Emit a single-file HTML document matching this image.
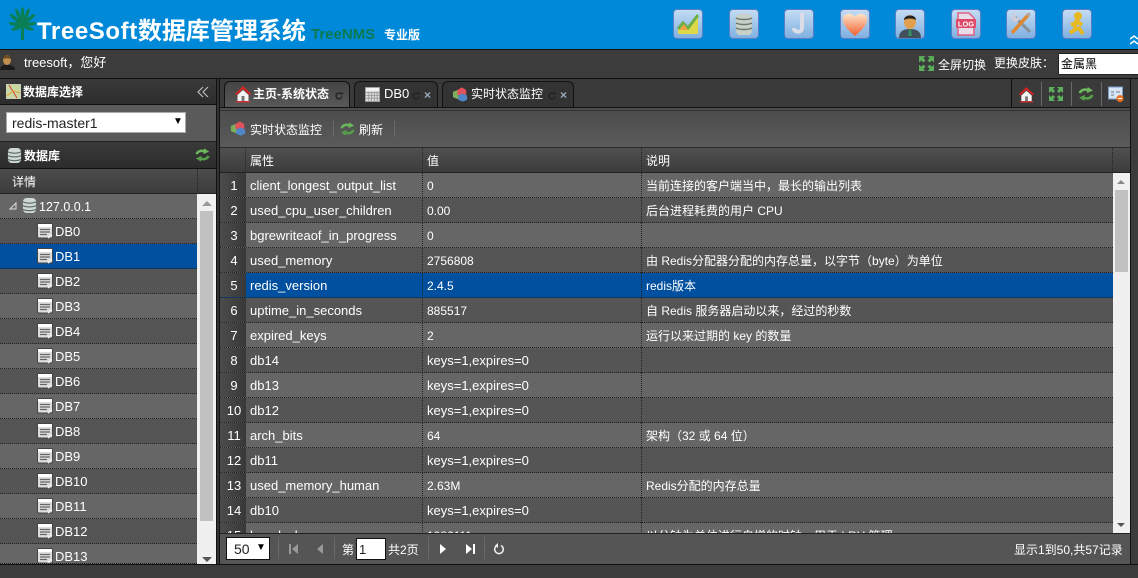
<!DOCTYPE html>
<html><head><meta charset="utf-8"><style>
*{box-sizing:border-box}
html,body{margin:0;padding:0;width:1138px;height:578px;overflow:hidden;background:#3c3c3c;font-family:"Liberation Sans","Noto Sans CJK SC",sans-serif;font-size:13px;color:#fff}
.a{position:absolute;white-space:nowrap}
.t{position:absolute;white-space:nowrap;line-height:16px}
.ti{position:absolute;top:9px;width:30px;height:30px;border:1px solid #5b7fc4;border-radius:4px;background:linear-gradient(#c4dcf4,#7fb0e0)}
.ti svg,.i svg{display:block}
.i{position:absolute}
.hd{background:linear-gradient(#3a3a3a,#2c2c2c)}
.r{position:absolute;left:220px;width:893px;height:25px;border-bottom:1px dotted #222;line-height:26px}
.r span{position:absolute;top:0;white-space:nowrap}
.r .n{left:0;width:26px;height:24px;text-align:center;background:linear-gradient(90deg,#4c4c4c,#383838);padding-left:2px}
.r .k{left:30px}.r .v{left:207px}.r .d{left:426px;font-size:12px}.r .m{font-size:12px}
.r:before,.r:after{content:"";position:absolute;top:0;height:25px;border-left:1px dotted #222}
.r:before{left:202px}.r:after{left:421px}
.o{background:#666}.e{background:#555}.s{background:#00509f}
.l{position:absolute;left:0;width:197px;height:25px;border-bottom:1px dotted #222;line-height:26px}
.l span{position:absolute;left:55px}
.l svg{position:absolute;left:37px;top:4px}
.sp{position:absolute;width:1px;background:#6a6a6a}
</style></head><body>
<svg width="0" height="0" style="position:absolute"><defs>
<symbol id="db" viewBox="0 0 16 16"><rect x=".5" y=".5" width="15" height="14.500" rx="1.500" fill="#ddd" stroke="#444"/><rect x="1" y="1" width="14" height="3" fill="#fff"/><path d="M3 6.500h10M3 9h10M3 11.500h7" stroke="#666" stroke-width="1.200"/><path d="M11 15l4-3.500" stroke="#eee" stroke-width="1.500"/></symbol>
<symbol id="cyl" viewBox="0 0 16 18"><rect x="1" y="1" width="14" height="16" rx="4" fill="#cfd8d4"/><path d="M1 5c3 2 11 2 14 0M1 9c3 2 11 2 14 0M1 13c3 2 11 2 14 0" stroke="#5a6a64" stroke-width="1.200" fill="none"/></symbol>
<symbol id="ref" viewBox="0 0 18 16"><path d="M2 7C3 3 8 2 12 4" stroke="#6cb85c" stroke-width="3" fill="none"/><path d="M11 0l6 4-7 3z" fill="#6cb85c"/><path d="M16 9C15 13 10 14 6 12" stroke="#55a048" stroke-width="3" fill="none"/><path d="M7 16l-6-4 7-3z" fill="#55a048"/></symbol>
<symbol id="home" viewBox="0 0 18 18"><path d="M9 1L1 9l1.500 1L9 4l6.500 6L17 9z" fill="#d22"/><path d="M3.500 10L9 5l5.500 5v6h-11z" fill="#f4f4f4"/><rect x="7.500" y="11" width="3" height="5" fill="#777"/><rect x="2" y="16" width="14" height="1.500" fill="#c33"/></symbol>
<symbol id="cube" viewBox="0 0 18 16"><path d="M1 5l5-2 4 2v6l-4 2-5-2z" fill="#7cb05c"/><path d="M6 3l5-3 5 3v5l-5 2-5-2z" fill="#e2525a"/><path d="M7 9l5-2 5 2v5l-5 2-5-2z" fill="#4f86c8"/></symbol>
<symbol id="cal" viewBox="0 0 16 16"><rect x=".5" y=".5" width="15" height="15" fill="#ddd" stroke="#999"/><rect x="1" y="1" width="14" height="3" fill="#f4f4f4"/><path d="M1 6h14M1 9h14M1 12h14M4 5v10M7 5v10M10 5v10M13 5v10" stroke="#999" fill="none"/></symbol>
<symbol id="ex" viewBox="0 0 16 16"><path d="M1 1h6L5 3l2 2-2 2-2-2-2 2zM15 1v6l-2-2-2 2-2-2 2-2-2-2zM1 15V9l2 2 2-2 2 2-2 2 2 2zM15 15H9l2-2-2-2 2-2 2 2 2-2z" fill="#5cb05c"/></symbol>
<symbol id="rl" viewBox="0 0 8 8"><path d="M6.500 2.200A3 3 0 1 0 7 4.500" stroke="#222" stroke-width="1.400" fill="none"/><path d="M5 2.500h3V0z" fill="#222"/></symbol>
</defs></svg>

<!-- header -->
<div class="a" style="left:0;top:0;width:1138px;height:49px;background:#0089d9"></div>
<div class="a" style="left:0;top:49px;width:1138px;height:1px;background:#111"></div>
<svg class="i" style="left:9px;top:7px" width="27" height="33" viewBox="0 0 27 33"><rect x="12" y="14" width="3" height="19" fill="#0a7f55"/><g fill="#0a7f55"><ellipse cx="13.500" cy="6" rx="1.800" ry="6"/><ellipse cx="9" cy="7" rx="1.800" ry="6" transform="rotate(-22 9 7)"/><ellipse cx="18" cy="7" rx="1.800" ry="6" transform="rotate(22 18 7)"/><ellipse cx="5.500" cy="11" rx="1.800" ry="6" transform="rotate(-50 5.500 11)"/><ellipse cx="21.500" cy="11" rx="1.800" ry="6" transform="rotate(50 21.500 11)"/><ellipse cx="5" cy="17" rx="1.800" ry="6" transform="rotate(-80 5 17)"/><ellipse cx="22" cy="17" rx="1.800" ry="6" transform="rotate(80 22 17)"/><ellipse cx="8" cy="21" rx="1.800" ry="6" transform="rotate(-110 8 21)"/><ellipse cx="19" cy="21" rx="1.800" ry="6" transform="rotate(110 19 21)"/><circle cx="13.500" cy="15" r="6"/></g></svg>
<div class="t" style="left:37px;top:17px;font-size:24px;line-height:30px;font-weight:bold"><span style="letter-spacing:.6px">TreeSoft</span>数据库管理系统</div>
<div class="t" style="left:311px;top:26px;font-size:15px;font-weight:bold;line-height:18px;color:#0a7a50">TreeNMS</div>
<div class="t" style="left:384px;top:27px;font-size:12px;font-weight:bold;line-height:16px">专业版</div>

<div class="ti" style="left:673px"><svg width="28" height="28" viewBox="0 0 28 28"><path d="M4 24V18L10 12 14 17 24 5V24z" fill="#dcd84a"/><path d="M4 19l5-6 5 5 10-13" stroke="#6cae4a" stroke-width="3" fill="none"/><path d="M6 20l4-6 4 6z" fill="#f0a040"/></svg></div>
<div class="ti" style="left:729px"><svg width="28" height="28" viewBox="0 0 28 28"><rect x="6" y="4" width="16" height="21" rx="4" fill="#c8d0c8"/><path d="M6 8c4 2 12 2 16 0M6 13c4 2 12 2 16 0M6 18c4 2 12 2 16 0" stroke="#687870" stroke-width="1.500" fill="none"/></svg></div>
<div class="ti" style="left:784px"><svg width="28" height="28" viewBox="0 0 28 28"><path d="M17 3v15c0 5-8 5-8 0" stroke="#dcdce8" stroke-width="4" fill="none"/></svg></div>
<div class="ti" style="left:840px"><svg width="28" height="28" viewBox="0 0 28 28"><defs><linearGradient id="h" x1="0" y1="0" x2="0" y2="1"><stop offset="0" stop-color="#ffe4c8"/><stop offset="1" stop-color="#f06030"/></linearGradient></defs><path d="M14 26C7 20 2 15 2 9c0-6 9-7 12-2 3-5 12-4 12 2 0 6-5 11-12 17z" fill="url(#h)"/></svg></div>
<div class="ti" style="left:895px"><svg width="28" height="28" viewBox="0 0 28 28"><path d="M3 28c0-7 5-9 11-9s11 2 11 9z" fill="#40505c"/><ellipse cx="14" cy="12" rx="6" ry="7" fill="#e0a050"/><path d="M8 10c0-6 12-6 12 0-4-2-8-2-12 0z" fill="#222"/><path d="M13 19h2l1 7h-4z" fill="#3a8a60"/></svg></div>
<div class="ti" style="left:951px"><svg width="28" height="28" viewBox="0 0 28 28"><path d="M6 3h11l5 5v17H6z" fill="#e8dce8" stroke="#e06080" stroke-width="1.500"/><rect x="4" y="9" width="20" height="9" rx="1" fill="#e04868"/><text x="14" y="16.500" font-size="7.500" font-weight="bold" fill="#fff" text-anchor="middle" font-family="Liberation Sans">LOG</text></svg></div>
<div class="ti" style="left:1006px"><svg width="28" height="28" viewBox="0 0 28 28"><path d="M8 7l15 15" stroke="#889098" stroke-width="3"/><path d="M4 8a5 5 0 0 1 6-5L8 6l2 2 3-2a5 5 0 0 1-6 6z" fill="#ccd"/><path d="M22 4L5 23" stroke="#e08830" stroke-width="3.500"/><path d="M20 6l3-3" stroke="#aab" stroke-width="2"/></svg></div>
<div class="ti" style="left:1062px"><svg width="28" height="28" viewBox="0 0 28 28"><circle cx="15" cy="6" r="4" fill="#e8b820"/><path d="M14 10c-2 3-2 7-1 9l-6 4M14 11l5 4M15 17l5 7M13 13l-5 2" stroke="#e8b820" stroke-width="4" fill="none"/></svg></div>
<svg class="i" style="left:1130px;top:35px" width="8" height="10" viewBox="0 0 8 10"><path d="M0 4l4-3 4 3M0 9l4-3 4 3" stroke="#fff" stroke-width="1.500" fill="none"/></svg>

<!-- top bar -->
<svg class="i" style="left:0;top:54px" width="15" height="16" viewBox="0 0 15 16"><path d="M0 16c0-4 3-5 7-5s8 1 8 5z" fill="#1a1a1a"/><ellipse cx="7" cy="6" rx="4" ry="5" fill="#c09050"/><path d="M3 5c0-5 8-5 8 0-3-1-5-1-8 0z" fill="#6a4a20"/></svg>
<div class="t" style="left:24px;top:55px">treesoft，您好</div>
<svg class="i" style="left:918px;top:55px" width="17" height="17"><use href="#ex"/></svg>
<div class="t" style="left:938px;top:57px;font-size:12px">全屏切换</div>
<div class="t" style="left:994px;top:55px;font-size:12px">更换皮肤：</div>
<div class="a" style="left:1058px;top:53px;width:82px;height:22px;background:#fff;border:1px solid #222;color:#000;padding-left:2px;line-height:20px;font-size:12px">金属黑</div>
<div class="a" style="left:0;top:78px;width:1138px;height:1px;background:#111"></div>

<!-- left panel -->
<div class="a" style="left:216px;top:79px;width:4px;height:485px;background:#333;border-left:1px solid #111;border-right:1px solid #111"></div>
<div class="a hd" style="left:0;top:79px;width:216px;height:26px;border-bottom:1px solid #111"></div>
<svg class="i" style="left:6px;top:84px" width="15" height="15" viewBox="0 0 15 15"><rect width="15" height="15" fill="#c8d8a0" stroke="#ccc"/><path d="M3 1l8 13" stroke="#d04030"/><path d="M1 12l6-5 7 2" stroke="#e0a030" fill="none"/></svg>
<div class="t" style="left:23px;top:84px;font-weight:bold;font-size:12px">数据库选择</div>
<svg class="i" style="left:197px;top:86px" width="12" height="12" viewBox="0 0 12 12"><path d="M6 1L1 6l5 5M11 1L6 6l5 5" stroke="#bbb" stroke-width="1.200" fill="none"/></svg>
<div class="a" style="left:0;top:105px;width:216px;height:36px;background:#5a5a5a"></div>
<div class="a" style="left:6px;top:112px;width:180px;height:21px;background:#fff;border:1px solid #aaa;color:#222;line-height:20px;padding-left:5px;font-size:14px">redis-master1<span style="position:absolute;left:166px;top:-1px;font-size:10px;color:#000">▼</span></div>
<div class="a hd" style="left:0;top:141px;width:216px;height:28px;border-top:1px solid #222;border-bottom:1px solid #111"></div>
<svg class="i" style="left:7px;top:147px" width="15" height="17"><use href="#cyl"/></svg>
<div class="t" style="left:24px;top:148px;font-weight:bold;font-size:12px">数据库</div>
<svg class="i" style="left:195px;top:148px" width="15" height="14"><use href="#ref"/></svg>
<div class="a" style="left:0;top:169px;width:216px;height:25px;background:linear-gradient(#4c4c4c,#3c3c3c);border-bottom:1px solid #222"></div>
<div class="a" style="left:197px;top:169px;width:1px;height:25px;border-left:1px dotted #222"></div>
<div class="t" style="left:12px;top:174px;font-size:12px">详情</div>

<div class="l o" style="top:194px"><span style="left:39px;font-size:12.500px">127.0.0.1</span></div>
<svg class="i" style="left:9px;top:202px" width="8" height="8" viewBox="0 0 8 8"><path d="M1 7h6V1z" fill="none" stroke="#ddd"/></svg>
<svg class="i" style="left:22px;top:197px" width="15" height="17"><use href="#cyl"/></svg>
<div class="l e" style="top:219px"><svg width="16" height="16"><use href="#db"/></svg><span>DB0</span></div>
<div class="l s" style="top:244px"><svg width="16" height="16"><use href="#db"/></svg><span>DB1</span></div>
<div class="l e" style="top:269px"><svg width="16" height="16"><use href="#db"/></svg><span>DB2</span></div>
<div class="l o" style="top:294px"><svg width="16" height="16"><use href="#db"/></svg><span>DB3</span></div>
<div class="l e" style="top:319px"><svg width="16" height="16"><use href="#db"/></svg><span>DB4</span></div>
<div class="l o" style="top:344px"><svg width="16" height="16"><use href="#db"/></svg><span>DB5</span></div>
<div class="l e" style="top:369px"><svg width="16" height="16"><use href="#db"/></svg><span>DB6</span></div>
<div class="l o" style="top:394px"><svg width="16" height="16"><use href="#db"/></svg><span>DB7</span></div>
<div class="l e" style="top:419px"><svg width="16" height="16"><use href="#db"/></svg><span>DB8</span></div>
<div class="l o" style="top:444px"><svg width="16" height="16"><use href="#db"/></svg><span>DB9</span></div>
<div class="l e" style="top:469px"><svg width="16" height="16"><use href="#db"/></svg><span>DB10</span></div>
<div class="l o" style="top:494px"><svg width="16" height="16"><use href="#db"/></svg><span>DB11</span></div>
<div class="l e" style="top:519px"><svg width="16" height="16"><use href="#db"/></svg><span>DB12</span></div>
<div class="l o" style="top:544px;height:20px;overflow:hidden"><svg width="16" height="16"><use href="#db"/></svg><span>DB13</span></div>
<div class="a" style="left:197px;top:194px;width:19px;height:370px;background:#f0f0f0"></div>
<div class="a" style="left:200px;top:211px;width:13px;height:310px;background:#c0c0c0"></div>
<div class="a" style="left:202px;top:201px;border:5px solid transparent;border-top:0;border-bottom:5px solid #999"></div>
<div class="a" style="left:202px;top:557px;border:5px solid transparent;border-bottom:0;border-top:5px solid #555"></div>
<div class="a" style="left:0;top:564px;width:1138px;height:1px;background:#111"></div>

<!-- tabs -->
<div class="a" style="left:220px;top:79px;width:910px;height:28px;background:#3a3a3a"></div>
<div class="a" style="left:224px;top:81px;width:126px;height:28px;background:linear-gradient(#444,#5a5a5a);border:1px solid #111;border-bottom:0;border-radius:6px 6px 0 0"></div>
<svg class="i" style="left:234px;top:85px" width="18" height="18"><use href="#home"/></svg>
<div class="t" style="left:253px;top:86px;font-weight:bold;font-size:12px">主页-系统状态</div>
<svg class="i" style="left:335px;top:92px" width="8" height="8"><use href="#rl"/></svg>
<div class="a" style="left:354px;top:81px;width:84px;height:26px;background:#333;border:1px solid #111;border-bottom:0;border-radius:6px 6px 0 0"></div>
<svg class="i" style="left:365px;top:87px" width="15" height="15"><use href="#cal"/></svg>
<div class="t" style="left:384px;top:86px">DB0</div>
<svg class="i" style="left:412px;top:92px" width="8" height="8"><use href="#rl"/></svg>
<div class="t" style="left:424px;top:87px;font-size:12px;font-weight:bold;color:#9ab">×</div>
<div class="a" style="left:442px;top:81px;width:132px;height:26px;background:#333;border:1px solid #111;border-bottom:0;border-radius:6px 6px 0 0"></div>
<svg class="i" style="left:452px;top:87px" width="16" height="15"><use href="#cube"/></svg>
<div class="t" style="left:471px;top:86px;font-size:12px">实时状态监控</div>
<svg class="i" style="left:548px;top:92px" width="8" height="8"><use href="#rl"/></svg>
<div class="t" style="left:560px;top:87px;font-size:12px;font-weight:bold;color:#9ab">×</div>
<div class="a" style="left:1011px;top:79px;width:1px;height:28px;background:#111"></div>
<svg class="i" style="left:1018px;top:86px" width="17" height="17"><use href="#home"/></svg>
<div class="sp" style="left:1041px;top:82px;height:24px"></div>
<svg class="i" style="left:1048px;top:86px" width="16" height="16"><use href="#ex"/></svg>
<div class="sp" style="left:1071px;top:82px;height:24px"></div>
<svg class="i" style="left:1078px;top:87px" width="16" height="14"><use href="#ref"/></svg>
<div class="sp" style="left:1101px;top:82px;height:24px"></div>
<svg class="i" style="left:1108px;top:86px" width="16" height="17" viewBox="0 0 16 17"><rect x=".5" y="1" width="14" height="12" fill="#d8e4f4" stroke="#7a9ac8"/><path d="M3 6h3M8 6h4M3 9h3" stroke="#678"/><circle cx="12" cy="12.500" r="3.500" fill="#e87020"/><rect x="10" y="12" width="4" height="1" fill="#fff"/></svg>
<div class="a" style="left:219px;top:107px;width:911px;height:1px;background:#111"></div>
<div class="a" style="left:1130px;top:79px;width:1px;height:486px;background:#111"></div>

<!-- toolbar -->
<div class="a" style="left:220px;top:108px;width:910px;height:39px;background:linear-gradient(#4c4c4c,#5a5a5a)"></div>
<div class="a" style="left:220px;top:110px;width:910px;height:1px;background:#333"></div>
<svg class="i" style="left:230px;top:121px" width="16" height="15"><use href="#cube"/></svg>
<div class="t" style="left:250px;top:122px;font-size:12px">实时状态监控</div>
<div class="sp" style="left:333px;top:121px;height:16px"></div>
<svg class="i" style="left:340px;top:122px" width="15" height="14"><use href="#ref"/></svg>
<div class="t" style="left:359px;top:122px;font-size:12px">刷新</div>
<div class="sp" style="left:394px;top:121px;height:16px"></div>

<!-- grid header -->
<div class="a" style="left:220px;top:147px;width:910px;height:26px;background:linear-gradient(#505050,#3c3c3c);border-top:1px solid #2c2c2c;border-bottom:1px solid #222"></div>
<div class="a" style="left:245px;top:148px;height:25px;border-left:1px dotted #222"></div>
<div class="a" style="left:422px;top:148px;height:25px;border-left:1px dotted #222"></div>
<div class="a" style="left:641px;top:148px;height:25px;border-left:1px dotted #222"></div>
<div class="a" style="left:1112px;top:148px;height:25px;border-left:1px dotted #222"></div>
<div class="t" style="left:250px;top:153px;font-size:12px">属性</div>
<div class="t" style="left:427px;top:153px;font-size:12px">值</div>
<div class="t" style="left:646px;top:153px;font-size:12px">说明</div>

<!-- rows -->
<div class="r o" style="top:173px"><span class="n">1</span><span class="k">client_longest_output_list</span><span class="v m">0</span><span class="d">当前连接的客户端当中，最长的输出列表</span></div>
<div class="r e" style="top:198px"><span class="n">2</span><span class="k">used_cpu_user_children</span><span class="v m">0.00</span><span class="d">后台进程耗费的用户 CPU</span></div>
<div class="r o" style="top:223px"><span class="n">3</span><span class="k">bgrewriteaof_in_progress</span><span class="v m">0</span><span class="d"></span></div>
<div class="r e" style="top:248px"><span class="n">4</span><span class="k">used_memory</span><span class="v m">2756808</span><span class="d">由 Redis分配器分配的内存总量，以字节（byte）为单位</span></div>
<div class="r s" style="top:273px"><span class="n">5</span><span class="k">redis_version</span><span class="v m">2.4.5</span><span class="d">redis版本</span></div>
<div class="r e" style="top:298px"><span class="n">6</span><span class="k">uptime_in_seconds</span><span class="v m">885517</span><span class="d">自 Redis 服务器启动以来，经过的秒数</span></div>
<div class="r o" style="top:323px"><span class="n">7</span><span class="k">expired_keys</span><span class="v m">2</span><span class="d">运行以来过期的 key 的数量</span></div>
<div class="r e" style="top:348px"><span class="n">8</span><span class="k">db14</span><span class="v">keys=1,expires=0</span></div>
<div class="r o" style="top:373px"><span class="n">9</span><span class="k">db13</span><span class="v">keys=1,expires=0</span></div>
<div class="r e" style="top:398px"><span class="n">10</span><span class="k">db12</span><span class="v">keys=1,expires=0</span></div>
<div class="r o" style="top:423px"><span class="n">11</span><span class="k">arch_bits</span><span class="v m">64</span><span class="d">架构（32 或 64 位）</span></div>
<div class="r e" style="top:448px"><span class="n">12</span><span class="k">db11</span><span class="v">keys=1,expires=0</span></div>
<div class="r o" style="top:473px"><span class="n">13</span><span class="k">used_memory_human</span><span class="v m">2.63M</span><span class="d">Redis分配的内存总量</span></div>
<div class="r e" style="top:498px"><span class="n">14</span><span class="k">db10</span><span class="v">keys=1,expires=0</span></div>
<div class="r o" style="top:523px"><span class="n">15</span><span class="k">lru_clock</span><span class="v m">1086111</span><span class="d">以分钟为单位进行自增的时钟，用于 LRU 管理</span></div>

<!-- right scrollbar -->
<div class="a" style="left:1113px;top:173px;width:17px;height:360px;background:#f0f0f0"></div>
<div class="a" style="left:1115px;top:190px;width:13px;height:82px;background:#c0c0c0"></div>
<div class="a" style="left:1117px;top:180px;border:4px solid transparent;border-top:0;border-bottom:4px solid #888"></div>
<div class="a" style="left:1117px;top:523px;border:4px solid transparent;border-bottom:0;border-top:4px solid #555"></div>

<!-- pager -->
<div class="a" style="left:220px;top:533px;width:910px;height:31px;background:#555;border-top:1px solid #222"></div>
<div class="a" style="left:226px;top:537px;width:44px;height:23px;background:#fff;border:1px solid #111;color:#222;line-height:22px;padding-left:7px;font-size:14px">50<span style="position:absolute;left:29px;top:-1px;font-size:10px;color:#000">▼</span></div>
<div class="sp" style="left:278px;top:537px;height:22px"></div>
<svg class="i" style="left:288px;top:543px" width="11" height="12" viewBox="0 0 11 12"><path d="M1 1h2v10H1zM10 1v10L4 6z" fill="#999"/></svg>
<svg class="i" style="left:315px;top:543px" width="9" height="12" viewBox="0 0 9 12"><path d="M8 1v10L2 6z" fill="#999"/></svg>
<div class="sp" style="left:334px;top:537px;height:22px"></div>
<div class="t" style="left:342px;top:542px;font-size:12px">第</div>
<div class="a" style="left:356px;top:538px;width:30px;height:22px;background:#fff;border:1px solid #111;color:#222;line-height:21px;padding-left:2px">1</div>
<div class="t" style="left:388px;top:542px;font-size:12px">共2页</div>
<div class="sp" style="left:428px;top:537px;height:22px"></div>
<svg class="i" style="left:439px;top:543px" width="9" height="12" viewBox="0 0 9 12"><path d="M1 1v10L7 6z" fill="#fff"/></svg>
<svg class="i" style="left:465px;top:543px" width="11" height="12" viewBox="0 0 11 12"><path d="M1 1v10L7 6zM8 1h2v10H8z" fill="#fff"/></svg>
<div class="sp" style="left:484px;top:537px;height:22px"></div>
<svg class="i" style="left:493px;top:543px" width="12" height="12" viewBox="0 0 12 12"><path d="M4 2.500a4.300 4.300 0 1 0 4 0" stroke="#eee" stroke-width="1.500" fill="none"/><path d="M5 0v5L2 2.500z" fill="#eee"/></svg>
<div class="t" style="left:1014px;top:542px;font-size:12px">显示1到50,共57记录</div>
</body></html>
